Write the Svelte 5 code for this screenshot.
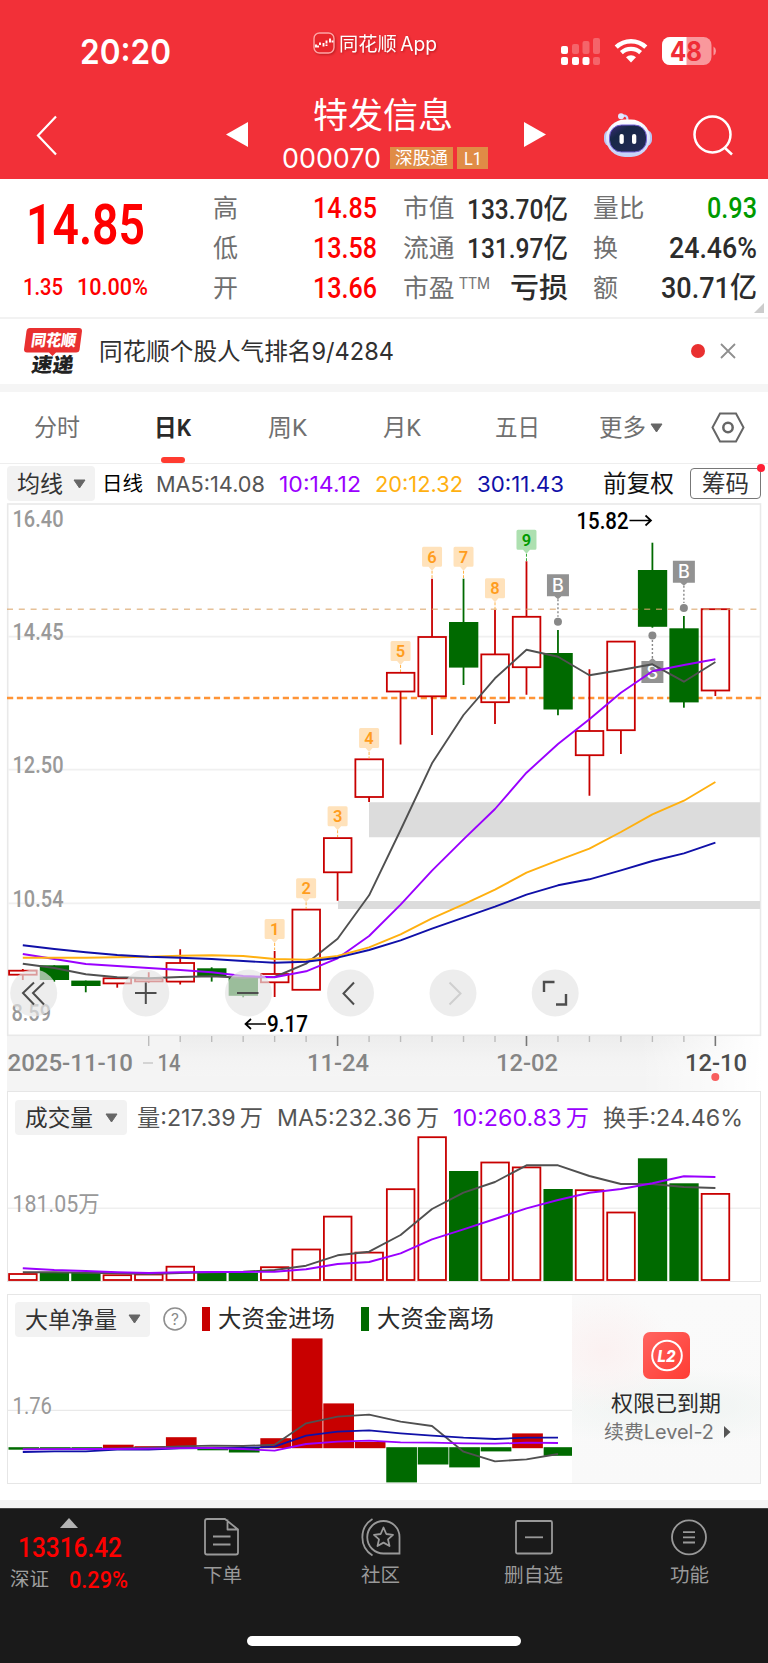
<script>
  const DIN = 'Roboto, "Noto Sans CJK SC", sans-serif';
  const UI = 'Inter, "Noto Sans CJK SC", sans-serif';
  const RED = '#c80000';
  const GREEN = '#006a00';
  const STEP = 31.48;
  const cx = (i) => 22.8 + i * STEP;
  const path = (ys) => ys.map((y, i) => `${cx(i).toFixed(1)},${y}`).join(' ');

  // [up, bodyTop, bodyBottom, high, low]
  const candles = [
    [1, 970.7, 974.7, 969, 980], [0, 965.3, 980, 965.3, 981.7], [0, 980.6, 986, 980.6, 992.3],
    [1, 978.3, 983.4, 978.3, 987.7], [1, 978.7, 981.4, 972.3, 983], [1, 963, 981.6, 949.3, 984.6],
    [0, 968.3, 976.7, 967.3, 981.6], [0, 977.5, 995.8, 977.5, 997.3], [1, 974, 982.3, 951, 997],
    [1, 909.6, 989.8, 909.6, 989.8], [1, 838.1, 872.3, 838.1, 900.8], [1, 759.3, 797, 759.3, 802],
    [1, 672.8, 691.5, 672.8, 744.5], [1, 637, 696.3, 578.7, 735], [0, 622, 667.6, 578.7, 685],
    [1, 654.4, 702.2, 610, 724], [1, 616.8, 667.2, 561.3, 694.7], [0, 653, 709.5, 630, 715.3],
    [1, 731, 755.2, 669.3, 795.7], [1, 641.6, 730.2, 641.6, 754], [0, 570, 626.8, 542.7, 627.7],
    [0, 628.3, 702.4, 616, 707.7], [1, 609.2, 690.5, 609.2, 696]
  ];
  const ma5 = [963.7, 968, 974.3, 977.3, 978.3, 977, 976.3, 977.7, 977, 963.7, 938.7, 895.3, 830, 763.3, 715, 678.3, 649.7, 656.7, 675.3, 670, 664.3, 681.7, 662];
  const ma10 = [954, 959, 964, 966, 968, 970, 972.3, 976, 977.3, 971.3, 958.3, 936, 904.7, 870.7, 839.3, 809, 772.7, 744, 719.3, 692.7, 671.3, 665, 659.3];
  const ma20 = [957.7, 957.7, 957.7, 957.3, 956.7, 955.7, 955.3, 956, 959, 959.7, 956, 947.3, 934.3, 918.3, 904.3, 889.7, 872.7, 860.3, 848.7, 832, 814.3, 800.7, 782];
  const ma30 = [945.3, 949, 952.3, 955, 956.7, 957.7, 959, 961, 962.7, 961.7, 957.7, 950, 940.3, 928.7, 917.7, 906.7, 894.7, 885.3, 879.3, 870.3, 861, 853.3, 842.7];

  // [number, candle index, box top, stem end]
  const counts = [
    [1, 8, 919, 950], [2, 9, 878.3, 909], [3, 10, 806.3, 837], [4, 11, 728, 758.5], [5, 12, 641, 672],
    [6, 13, 546.7, 578], [7, 14, 546.7, 578], [8, 15, 578.3, 609.5], [9, 16, 529.7, 561]
  ];

  const volTop = [1274, 1273, 1273, 1275.2, 1274.5, 1266.7, 1272.7, 1272.7, 1267.2, 1249.5, 1216.6, 1252.6, 1189.2, 1137.2, 1171, 1162.5, 1167.4, 1189, 1190.2, 1212.5, 1158.3, 1183.3, 1193.9];
  const vol5 = [1272.3, 1272.3, 1272.7, 1273.3, 1274, 1273, 1272.3, 1271.7, 1270, 1265.7, 1255.3, 1251.7, 1235, 1209, 1192.7, 1182, 1165.3, 1165.3, 1176, 1184, 1184, 1187, 1188];
  const vol10 = [1268.3, 1270, 1271, 1272.3, 1273, 1272.3, 1272, 1272, 1271.7, 1269.3, 1264, 1262, 1253.3, 1239.3, 1229.3, 1219, 1208.3, 1200, 1192.7, 1189, 1183.3, 1176.3, 1177];

  const flow = [
    [0, 1449.7], [0, 1448.8], [0, 1448.8], [1, 1444.7], [1, 1446.2], [1, 1437.2], [0, 1450.3], [0, 1452.5], [1, 1438.2],
    [1, 1338.4], [1, 1403.4], [1, 1442], [0, 1482.4], [0, 1464.5], [0, 1467.4], [0, 1451.4], [1, 1433.4], [0, 1455.8]
  ];
  const f1 = [1449, 1449, 1449, 1448.5, 1447.7, 1446.3, 1445.7, 1446, 1444.7, 1423.3, 1416.7, 1414.7, 1421.7, 1426, 1451.7, 1461.3, 1459.3, 1454];
  const f2 = [1452, 1451.3, 1451.3, 1449.7, 1449.5, 1448.3, 1448, 1448, 1446.7, 1435.7, 1431.7, 1430.3, 1433.3, 1435.7, 1437.7, 1439, 1437.7, 1437.7];
  const f3 = [1449.3, 1449.2, 1449, 1449, 1448.7, 1448.2, 1448, 1449, 1450.7, 1444, 1441.7, 1440.7, 1442.3, 1442.7, 1443.3, 1443.7, 1442.7, 1443];

  const stats = [
    { k: '高', v: '14.85', w: 64, c: '#fe0000', k2: '市值', v2: '133.70亿', w2: 101, k3: '量比', v3: '0.93', w3: 50, c3: '#009a00' },
    { k: '低', v: '13.58', w: 64, c: '#fe0000', k2: '流通', v2: '131.97亿', w2: 101, k3: '换', v3: '24.46%', w3: 88, c3: '#2c2c2c' },
    { k: '开', v: '13.66', w: 64, c: '#fe0000', k2: '市盈', ttm: true, v2: '亏损', w2: 58, k3: '额', v3: '30.71亿', w3: 96, c3: '#2c2c2c' }
  ];
  const tabs = [['分时', 46], ['日K', 37], ['周K', 39], ['月K', 38], ['五日', 45]];
</script>

{#snippet fit(text, w, size, fill, weight = 400, fam = DIN)}
  <svg class="fit" width={w} height={size}>
    <text x="0" y={size * 0.86} textLength={w} lengthAdjust="spacingAndGlyphs" font-family={fam} font-size={size} font-weight={weight} {fill}>{text}</text>
  </svg>
{/snippet}

{#snippet mark(text, x, w, cy, size, fill, weight = 400, fam = DIN)}
  <text {x} y={cy + size * 0.358} textLength={w} lengthAdjust="spacingAndGlyphs" font-family={fam} font-size={size} font-weight={weight} {fill}>{text}</text>
{/snippet}

{#snippet caret(w, h)}
  <svg class="fit" width={w} height={h}><path d="M1 1H{w - 1}L{w / 2} {h - 1}Z" fill="#666" stroke="#666" stroke-linejoin="round" /></svg>
{/snippet}

<div class="screen">
  <header>
    <div class="status">
      <div class="time">{@render fit('20:20', 91, 33.5, '#fff', 600, UI)}</div>
      <div class="app">
        <svg width="22" height="22" viewBox="0 0 22 22">
          <rect x="1" y="1" width="20" height="20" rx="5.5" fill="#e8262c" stroke="#ffa5a5" stroke-width="1.4" />
          <path d="M3 12.5v3M5 13.500v2M7 10.500v2.500M10.500 11v3.500M13.500 8.500v3M13.500 12.500v1.500M17 6.500v4M19.500 8.500v2" stroke="#fff" stroke-width="1.900" fill="none" />
        </svg>
        <span>{@render fit('同花顺\u2009App', 98, 19.5, '#fff', 400, UI)}</span>
      </div>
      <svg class="signal" width="40" height="28" fill="#fff">
        <rect x="0" y="9" width="7" height="8" rx="2" /><rect x="0" y="20" width="7" height="8" rx="2" />
        <rect x="11" y="7" width="7" height="10" rx="2" opacity=".25" /><rect x="11" y="20" width="7" height="8" rx="2" />
        <rect x="21.5" y="4" width="7" height="13" rx="2" opacity=".25" /><rect x="21.5" y="20" width="7" height="8" rx="2" />
        <rect x="32" y="1" width="7" height="16" rx="2" opacity=".25" /><rect x="32" y="20" width="7" height="8" rx="2" opacity=".25" />
      </svg>
      <svg class="wifi" width="34" height="26" viewBox="0 0 34 26" fill="none" stroke="#fff">
        <path d="M2.2 9.2A21.3 21.3 0 0 1 31.8 9.2" stroke-width="4.4" />
        <path d="M7.4 14.6A14 14 0 0 1 26.6 14.6" stroke-width="4.2" />
        <path d="M17 24.5L12 19.3A7.4 7.4 0 0 1 22 19.3Z" fill="#fff" stroke="none" />
      </svg>
      <svg class="battery" width="55" height="28">
        <defs><clipPath id="charge"><rect width="24.5" height="28" /></clipPath></defs>
        <rect width="49.5" height="28" rx="8" fill="#fff" opacity=".5" />
        <rect width="49.5" height="28" rx="8" fill="#fff" clip-path="url(#charge)" />
        <path d="M51.5 9.5Q54 11 54 14T51.5 18.5Z" fill="#fff" opacity=".5" />
        {@render mark('48', 8, 32, 14.2, 26.5, '#f02c36', 700, UI)}
      </svg>
    </div>
    <div class="nav">
      <svg class="back" width="22" height="42"><path d="M20 1.5L2 20.5L20 39.5" fill="none" stroke="#fff" stroke-width="2.2" /></svg>
      <svg width="22" height="25"><path d="M22 0V25L0 12.5Z" fill="#fff" /></svg>
      <div class="title">
        {@render fit('特发信息', 140, 35, '#fff')}
        <div class="code">
          {@render fit('000070', 99, 27.5, '#fff', 400, UI)}
          <span class="badge b1">{@render fit('深股通', 53, 17.5, '#fff')}</span>
          <span class="badge b2">{@render fit('L1', 18, 18.5, '#fff')}</span>
        </div>
      </div>
      <svg width="22" height="25"><path d="M0 0V25L22 12.5Z" fill="#fff" /></svg>
      <svg class="robot" width="48" height="46" viewBox="0 0 48 46">
        <defs>
          <linearGradient id="shell" x2="0" y2="1"><stop stop-color="#fff" /><stop offset="1" stop-color="#c3d0f8" /></linearGradient>
          <linearGradient id="face" x2="1" y2="1"><stop stop-color="#3e2c7c" /><stop offset=".3" stop-color="#172747" /><stop offset="1" stop-color="#252b58" /></linearGradient>
        </defs>
        <path d="M17 4Q25 2 23 10" fill="none" stroke="#ccd8ff" stroke-width="2.2" /><circle cx="17" cy="4.3" r="3" fill="#e2e8ff" />
        <rect x="0" y="18" width="48" height="16" rx="6" fill="#b9c5f4" />
        <rect x="2" y="7.500" width="44" height="37.500" rx="19" fill="url(#shell)" />
        <rect x="5.5" y="13" width="37" height="27" rx="12" fill="url(#face)" stroke="#7560d8" />
        <rect x="15.5" y="22" width="4.3" height="10" rx="2.1" fill="#fff" /><rect x="28" y="22" width="4.3" height="10" rx="2.1" fill="#fff" />
      </svg>
      <svg width="41" height="42" fill="none" stroke="#fff" stroke-width="2.5"><circle cx="19.500" cy="19.500" r="18" /><path d="M31.5 32.500L39 39.5" /></svg>
    </div>
  </header>

  <section class="quote">
    <div class="price">
      <div class="last">{@render fit('14.85', 119, 55, '#fe0000', 600)}</div>
      <div class="chg">{@render fit('1.35', 40, 23.5, '#fe0000', 500)}{@render fit('10.00%', 71, 23.5, '#fe0000', 500)}</div>
    </div>
    <div class="stats">
      {#each stats as s}
        <div class="srow">
          <span class="k">{@render fit(s.k, 25, 25, '#707070')}</span>
          <span class="v">{@render fit(s.v, s.w, 29, s.c, 500)}</span>
          <span class="k">{@render fit(s.k2, 51.5, 25, '#707070')}{#if s.ttm}<span class="ttm">{@render fit('TTM', 31, 16.5, '#777')}</span>{/if}</span>
          <span class="v">{@render fit(s.v2, s.w2, 28.5, '#2c2c2c', 500)}</span>
          <span class="k">{@render fit(s.k3, s.k3.length === 2 ? 51.5 : 25, 25, '#707070')}</span>
          <span class="v">{@render fit(s.v3, s.w3, 29, s.c3, 500)}</span>
        </div>
      {/each}
    </div>
    <i class="corner"></i>
  </section>

  <section class="news">
    <svg class="logo" width="58" height="48" viewBox="0 0 58 48">
      <path d="M6 0H55Q58 0 58 3L55.5 22Q55 24.5 52 24.5H32L28.5 28L25 24.5H3Q0 24.5 0 21.5L2.5 3Q3 0 6 0Z" fill="#e93030" />
      <g transform="skewX(-8)" font-family={DIN} font-weight="900">
        <text x="9" y="18.5" font-size="16" fill="#fff" textLength="45" lengthAdjust="spacingAndGlyphs">同花顺</text>
        <text x="13" y="44.5" font-size="20" fill="#222" textLength="42" lengthAdjust="spacingAndGlyphs">速递</text>
      </g>
    </svg>
    <span class="msg">{@render fit('同花顺个股人气排名9/4284', 295, 24, '#303030', 400, UI)}</span>
    <i class="unread"></i>
    <svg width="16" height="16"><path d="M1 1L15 15M15 1L1 15" stroke="#8f8f8f" stroke-width="1.8" /></svg>
  </section>

  <nav class="tabs">
    {#each tabs as [name, w], i}
      <div class="tab" class:on={i === 1}>{@render fit(name, w, 23.5, i === 1 ? '#2a2a2a' : '#707070', i === 1 ? 600 : 400)}</div>
    {/each}
    <div class="tab more">{@render fit('更多', 47, 23.5, '#707070')}{@render caret(13, 10)}</div>
    <svg width="34" height="31" fill="none" stroke="#666"><path d="M9 1.5H25L32.5 15.5L25 29.5H9L1.5 15.5Z" stroke-width="2" /><circle cx="17" cy="15.5" r="4.7" stroke-width="2.5" /></svg>
  </nav>

  <section class="legend">
    <div class="chip ma">{@render fit('均线', 46, 23, '#333')}{@render caret(13, 10)}</div>
    {@render fit('日线', 41, 20.5, '#000')}
    {@render fit('MA5:14.08', 109, 21.5, '#555', 400, UI)}
    {@render fit('10:14.12', 82, 21.5, '#9a00ff', 400, UI)}
    {@render fit('20:12.32', 88, 21.5, '#ffb010', 400, UI)}
    {@render fit('30:11.43', 87, 21.5, '#1010a8', 400, UI)}
    {@render fit('前复权', 71, 23.5, '#111')}
    <div class="chips">{@render fit('筹码', 47, 23.5, '#333')}<i></i></div>
  </section>

  <svg class="kline" width="768" height="588" viewBox="0 503 768 588">
    <defs>
      <linearGradient id="fade"><stop stop-color="#fff" stop-opacity="0" /><stop offset="1" stop-color="#fff" /></linearGradient>
      <linearGradient id="axis" x2="0" y2="1"><stop stop-color="#eaeaea" /><stop offset=".6" stop-color="#f3f3f3" /><stop offset="1" stop-color="#f5f5f5" /></linearGradient>
    </defs>
    <rect x="7" y="1035" width="754" height="56" fill="#f4f4f4" />
    <rect x="180" y="1036" width="581" height="40" fill="url(#axis)" opacity=".7" />
    <rect x="640" y="1036" width="122" height="55" fill="url(#fade)" />
    <rect x="7.7" y="504" width="752.8" height="531.3" fill="#fff" stroke="#e9e9e9" stroke-width="1.6" />
    {#each [636.7, 769.7, 903.3] as y}<path d="M8 {y}H760" stroke="#f0f0f0" stroke-width="1.7" />{/each}
    <path d="M369 802.3H760V837.3H369ZM338 901H760V909H338Z" fill="#dcdcdc" />

    {@render mark('16.40', 12.5, 51, 518.5, 23.5, '#999', 500)}
    {@render mark('14.45', 12.5, 51, 632, 23.5, '#999', 500)}
    {@render mark('12.50', 12.5, 51, 765, 23.5, '#999', 500)}
    {@render mark('10.54', 12.5, 51, 898.5, 23.5, '#999', 500)}
    {@render mark('8.59', 11.5, 39.5, 1012.5, 23.5, '#999', 500)}

    <path d="M7 698H761" stroke="#ff9436" stroke-width="2.3" stroke-dasharray="6.2 3.65" />
    {#each candles as [up, t, b, hi, lo], i}
      {#if up}
        <path d="M{cx(i)} {hi}V{t}M{cx(i)} {b}V{lo}" stroke={RED} stroke-width="1.8" />
        <rect x={cx(i) - 13.7} y={t} width="27.6" height={b - t} fill="none" stroke={RED} stroke-width="1.8" />
      {:else}
        <path d="M{cx(i)} {hi}V{lo}" stroke={GREEN} stroke-width="1.8" />
        <rect x={cx(i) - 14.5} y={t} width="29.3" height={b - t} fill={GREEN} />
      {/if}
    {/each}
    <path d="M7 609.3H761" stroke="#dba66c" stroke-opacity=".7" stroke-width="1.5" stroke-dasharray="6 5.8" />

    {#each counts as [n, i, y, end]}
      <path d="M{cx(i)} {y + 24}V{end}" stroke={n === 9 ? '#33a833' : '#ffb347'} stroke-width="1" stroke-dasharray="3 1.5" />
      <path d="M{cx(i) - 8.5} {y}h17q1.5 0 1.5 1.5v17q0 1.5 -1.5 1.5h-5l-3.5 4l-3.5 -4h-5q-1.5 0 -1.5 -1.5v-17q0 -1.5 1.5 -1.5Z" fill={n === 9 ? '#ade0b0' : '#ffe2bb'} />
      <text x={cx(i)} y={y + 16} text-anchor="middle" font-family={DIN} font-size="16.5" font-weight="600" fill={n === 9 ? '#009a00' : '#ff9d1e'}>{n}</text>
    {/each}

    {#each [[17, 574.3, 621.7], [21, 560.7, 608]] as [i, y, d]}
      <path d="M{cx(i)} {y + 25}V{d - 5}" stroke="#888" stroke-width="1.4" stroke-dasharray="2 2" />
      <path d="M{cx(i) - 11} {y}h22v22h-7.500l-3.500 3l-3.500 -3h-7.500Z" fill="#929292" />
      <circle cx={cx(i)} cy={d} r="4" fill="#888" />
      <text x={cx(i)} y={y + 17.5} text-anchor="middle" font-family={UI} font-size="18" font-weight="500" fill="#fff">B</text>
    {/each}
    <path d="M{cx(20)} 640V658" stroke="#888" stroke-width="1.4" stroke-dasharray="2 2" />
    <circle cx={cx(20)} cy="635.5" r="4" fill="#888" />
    <path d="M{cx(20) - 11} 661h7.500l3.500 -3l3.500 3h7.500v22h-22Z" fill="#929292" />
    <text x={cx(20)} y="678.8" text-anchor="middle" font-family={UI} font-size="18" font-weight="500" fill="#fff">S</text>

    <g fill="none" stroke-width="1.9" stroke-linejoin="round">
      <polyline points={path(ma5)} stroke="#505050" />
      <polyline points={path(ma10)} stroke="#9a00ff" />
      <polyline points={path(ma20)} stroke="#ffb010" />
      <polyline points={path(ma30)} stroke="#1010a8" />
    </g>

    {@render mark('15.82', 576.5, 52, 520.5, 23, '#000', 500)}
    <path d="M629.500 520.500H651M645.500 515.500L651 520.500L645.500 525.500" fill="none" stroke="#000" stroke-width="1.7" />
    {@render mark('9.17', 267, 41, 1024.2, 23, '#000', 500)}
    <path d="M266 1024H245.500M251 1019L245.500 1024L251 1029" fill="none" stroke="#000" stroke-width="1.7" />

    <g fill="#e4e4e4" fill-opacity=".68">
      {#each [33.7, 145.8, 248.4, 350.5, 453, 555.2] as x}<circle cx={x} cy="993" r="23.500" />{/each}
    </g>
    <g fill="none" stroke="#4d4d4d" stroke-width="2">
      <path d="M34 982.500L23 993L34 1004.500M44 982.500L33 993L44 1004.500" />
      <path d="M135 993H156.500M145.800 982.500V1004M237 993H258.500" />
      <path d="M354 982.500L343.500 993.500L354 1004.500" />
      <path d="M449.500 982.500L460.500 993.500L449.500 1004.500" stroke="#cfcfcf" />
      <path d="M544 992V982H554.500M566 994V1004.500H556" stroke-width="2.400" />
    </g>

    {#each Array(19) as _, k}
      {@const i = k + 4}
      {#if [10, 16, 22].includes(i)}
        <path d="M{cx(i)} 1036V1046" stroke="#777" stroke-width="1.600" />
      {:else}
        <path d="M{cx(i)} 1036V{i === 4 ? 1046 : 1042}" stroke="#bcbcbc" stroke-width="1.400" />
      {/if}
    {/each}
    {@render mark('2025-11-10', 7.5, 125.5, 1063, 23, '#858585', 500)}
    <path d="M143 1063H153" stroke="#ccc" stroke-width="1.600" />
    {@render mark('14', 157.5, 23, 1063, 23, '#858585', 500)}
    {@render mark('11-24', 307, 62, 1063, 23, '#858585', 500)}
    {@render mark('12-02', 496, 62, 1063, 23, '#858585', 500)}
    {@render mark('12-10', 685, 62, 1063, 23, '#4c4c4c', 500)}
    <circle cx="715.300" cy="1077" r="4" fill="#f85f5f" />
  </svg>

  <section class="panel volume">
    <div class="phead">
      <div class="chip">{@render fit('成交量', 68, 23, '#333')}{@render caret(13, 10)}</div>
      {@render fit('量:217.39\u2009万', 126, 23, '#555', 400, UI)}
      {@render fit('MA5:232.36\u2009万', 162, 23, '#555', 400, UI)}
      {@render fit('10:260.83\u2009万', 136, 23, '#9a00ff', 400, UI)}
      {@render fit('换手:24.46%', 140, 23, '#555', 400, UI)}
    </div>
    <svg class="plot" width="752" height="144" viewBox="8 1137 752 144">
      <path d="M8 1208.300H760" stroke="#efefef" stroke-width="1.500" />
      {@render mark('181.05万', 12.5, 87, 1204, 23, '#999', 400)}
      {#each volTop as t, i}
        {#if candles[i][0]}
          <rect x={cx(i) - 13.7} y={t} width="27.6" height={1280 - t} fill="none" stroke={RED} stroke-width="1.8" />
        {:else}
          <rect x={cx(i) - 14.5} y={t} width="29.3" height={1281 - t} fill={GREEN} />
        {/if}
      {/each}
      <g fill="none" stroke-width="1.9" stroke-linejoin="round">
        <polyline points={path(vol5)} stroke="#505050" /><polyline points={path(vol10)} stroke="#9a00ff" />
      </g>
    </svg>
  </section>

  <section class="panel orders">
    <div class="left">
      <div class="phead">
        <div class="chip">{@render fit('大单净量', 92, 23, '#333')}{@render caret(13, 10)}</div>
        <svg class="help" width="24" height="24"><circle cx="12" cy="12" r="11" fill="none" stroke="#8f8f8f" stroke-width="1.600" /><text x="12" y="17.500" text-anchor="middle" font-family={UI} font-size="15.500" fill="#8a8a8a">?</text></svg>
        <i class="key in"></i>{@render fit('大资金进场', 117, 23.500, '#2c2c2c')}
        <i class="key out"></i>{@render fit('大资金离场', 117, 23.500, '#2c2c2c')}
      </div>
      <svg width="564" height="145" viewBox="8 1338 564 145">
        <path d="M8 1410.300H572" stroke="#e9e9e9" stroke-width="1.300" />
        {@render mark('1.76', 12.5, 39.5, 1406, 23, '#999', 400)}
        {#each flow as [inn, y], i}
          <rect x={8.5 + i * STEP} y={inn ? y : 1447.2} width="30.700" height={inn ? 1448.200 - y : y - 1447.2} fill={inn ? RED : GREEN} />
        {/each}
        <g fill="none" stroke-width="1.800" stroke-linejoin="round">
          <polyline points={path(f1)} stroke="#505050" /><polyline points={path(f2)} stroke="#1010a8" /><polyline points={path(f3)} stroke="#9a00ff" />
        </g>
      </svg>
    </div>
    <div class="expired">
      <svg class="l2" width="47" height="47">
        <defs><linearGradient id="l2" x2="1" y2="1"><stop stop-color="#ff6460" /><stop offset="1" stop-color="#ff3c33" /></linearGradient></defs>
        <rect width="47" height="47" rx="7" fill="url(#l2)" /><circle cx="24" cy="23.500" r="14.800" fill="none" stroke="#fff" stroke-width="2" />
        <text x="14.500" y="29.500" font-family={UI} font-style="italic" font-weight="800" font-size="16" fill="#fff" textLength="18" lengthAdjust="spacingAndGlyphs">L2</text>
      </svg>
      {@render fit('权限已到期', 110, 22, '#2c2c2c')}
      <div class="renew">{@render fit('续费Level-2', 110, 19.500, '#747474', 400, UI)}<svg width="7" height="12"><path d="M0 0L6.500 6L0 12Z" fill="#555" /></svg></div>
    </div>
  </section>

  <footer>
    <div class="index">
      <svg class="up" width="18" height="10"><path d="M9 0L18 10H0Z" fill="#b3b3b3" /></svg>
      {@render fit('13316.42', 104, 28, '#fe0000', 500)}
      <div class="sz">{@render fit('深证', 39, 19, '#a0a0a0')}{@render fit('0.29%', 59, 24, '#fe0000', 500)}</div>
    </div>
    <div class="act">
      <svg width="40" height="40" fill="none" stroke="#999" stroke-width="1.800"><path d="M23 2H5Q3 2 3 4V35.500Q3 37.500 5 37.500H34Q36 37.500 36 35.500V12.500ZM25.500 2.500V12.500H36M11 19.500H28.500M11 27.500H28.500" stroke-linejoin="round" /></svg>
      {@render fit('下单', 39, 19.500, '#999')}
    </div>
    <div class="act">
      <svg width="42" height="40" fill="none" stroke="#999" stroke-width="1.800"><path d="M13.500 2A21.500 21.500 0 0 0 13.500 38.500M24.500 4A16 16 0 0 0 24.500 36.500H40.500V20A16 16 0 0 0 24.500 4Z" /><path d="M24.500 10.500L27.300 17L34 17.800L29 22.400L30.500 29L24.500 25.600L18.500 29L20 22.400L15 17.800L21.700 17Z" stroke-linejoin="round" /></svg>
      {@render fit('社区', 39, 19.500, '#999')}
    </div>
    <div class="act">
      <svg width="40" height="40" fill="none" stroke="#999" stroke-width="1.800"><rect x="3" y="4" width="36" height="32.500" rx="1.500" /><path d="M12 20.300H30" /></svg>
      {@render fit('删自选', 59, 19.500, '#999')}
    </div>
    <div class="act">
      <svg width="40" height="40" fill="none" stroke="#999" stroke-width="1.800"><circle cx="20" cy="20.300" r="17" /><path d="M14 15.200H26M14 20.300H26M14 25.500H26" /></svg>
      {@render fit('功能', 39, 19.500, '#999')}
    </div>
    <i class="home"></i>
  </footer>
</div>

<style>
  :global(body) { margin: 0; background: #fff; }
  .screen { width: 768px; height: 1663px; display: flex; flex-direction: column; background: #fff; overflow: hidden; }
  svg { display: block; flex: none; }
  .fit, .battery, .plot { overflow: visible; }
  i { display: block; flex: none; }

  header { height: 179px; flex: none; background: #f23038; }
  .status { height: 92px; display: flex; align-items: flex-start; padding-left: 80px; }
  .time { margin-top: 35px; }
  .app { display: flex; gap: 4px; margin: 32px 0 0 142px; filter: drop-shadow(1.500px 1.500px 1px #7007); }
  .app span { margin-top: 2px; }
  .signal { margin: 37px 0 0 124px; }
  .wifi { margin: 38px 0 0 13px; }
  .battery { margin: 37px 0 0 14px; }
  .nav { height: 87px; display: flex; align-items: flex-start; padding-left: 36px; }
  .nav > svg { margin-top: 30px; }
  .nav > .back { margin: 23px 168px 0 0; }
  .title { width: 206px; margin: 6px 36px 0 34px; display: flex; flex-direction: column; align-items: flex-start; }
  .title > .fit { margin-left: 31px; }
  .code { display: flex; align-items: center; margin-top: 13px; height: 23px; }
  .badge { height: 22px; margin-top: 1px; background: #e08c46; display: flex; align-items: center; justify-content: center; }
  .b1 { width: 63px; margin-left: 9px; }
  .b2 { width: 31px; margin-left: 4px; }
  .nav > .robot { margin: 20px 41px 0 58px; }
  .nav > svg:last-child { margin-top: 23px; }

  .quote { height: 138px; flex: none; display: flex; position: relative; }
  .price { width: 213px; padding-top: 18px; box-sizing: border-box; }
  .last { margin-left: 26px; }
  .chg { display: flex; gap: 14px; margin: 23px 0 0 23px; }
  .stats { width: 544px; padding-top: 9px; display: flex; flex-direction: column; }
  .srow { height: 39.700px; display: grid; grid-template-columns: 50px 114px 113px 78px 99px 90px; align-items: center; }
  .k { display: flex; align-items: center; height: 30px; }
  .v { display: flex; justify-content: flex-end; align-items: center; }
  .k:nth-child(3) { padding-left: 26px; }
  .k:nth-child(5) { padding-left: 25px; }
  .ttm { margin: -8px 0 0 4px; }
  .corner { position: absolute; right: 4px; bottom: 4px; border: 5px solid transparent; border-right-color: #ccc; border-bottom-color: #ccc; }

  .news { height: 65px; flex: none; border-top: 2px solid #f2f2f2; border-bottom: 8px solid #f5f5f5; display: flex; align-items: center; padding-left: 24px; }
  .msg { margin: -2px 0 0 17px; }
  .unread { width: 14px; height: 14px; border-radius: 50%; background: #e93030; margin: -1px 15px 0 297px; }
  .news > svg:last-child { margin-top: -1px; }

  .tabs { height: 71px; flex: none; box-sizing: content-box; border-bottom: 1px solid #eee; display: flex; align-items: center; }
  .tab { width: 115px; height: 71px; display: flex; align-items: center; justify-content: center; position: relative; left: -0.500px; }
  .tab.on::after { content: ''; position: absolute; left: 46px; bottom: 0; width: 24px; height: 6px; border-radius: 3px; background: #ff3b30; }
  .more { width: 113px; gap: 4px; margin-right: 23px; }

  .legend { height: 39px; flex: none; display: flex; align-items: center; padding-left: 7px; }
  .chip { height: 35px; background: #f2f2f2; border-radius: 4px; display: flex; align-items: center; gap: 12px; padding: 0 9px 0 10px; }
  .legend > .ma { height: 35px; width: 69px; margin-right: 7px; gap: 10px; }
  .legend > :nth-child(2) { margin-right: 12.500px; }
  .legend > :nth-child(3) { margin-right: 14.500px; }
  .legend > :nth-child(4) { margin-right: 13.500px; }
  .legend > :nth-child(5) { margin-right: 14px; }
  .legend > :nth-child(6) { margin-right: 39px; }
  .chips { position: relative; width: 69px; height: 29px; margin-left: 16px; border: 1px solid #777; border-radius: 4px; display: flex; align-items: center; justify-content: center; }
  .chips i { position: absolute; right: -5px; top: -5px; width: 8px; height: 8px; border-radius: 50%; background: #ff1f34; }

  .kline { flex: none; }
  .panel { width: 752px; flex: none; margin-left: 7px; border: 1px solid #e6e6e6; }
  .volume { height: 189px; }
  .phead { height: 45px; display: flex; align-items: center; padding: 6px 0 0 7px; box-sizing: border-box; gap: 14px; }
  .volume .phead { padding-top: 6px; }
  .volume .chip { margin-right: -4px; }

  .orders { margin-top: 12px; height: 188px; display: flex; }
  .left { width: 564px; }
  .orders .phead { height: 43px; gap: 0; padding-top: 5px; }
  .orders .chip { gap: 11px; }
  .help { margin: 0 15px 0 13px; }
  .key { width: 8px; height: 24px; }
  .in { background: #c80000; margin-right: 8px; }
  .out { background: #006a00; margin: 0 8px 0 26px; }
  .expired { width: 188px; display: flex; flex-direction: column; align-items: center; background: radial-gradient(ellipse 70px 60px at 32px 56px, #fbf1f1, transparent), radial-gradient(ellipse 150px 40px at 100px 112px, #eef3f1, transparent), linear-gradient(#fafafa, #f9f9f9); }
  .l2 { margin: 37px 0 13px; }
  .renew { display: flex; align-items: center; gap: 10px; margin: 8px 0 0 2px; }

  footer { height: 154px; flex: none; margin-top: 24px; border-top: 1px solid #444; box-shadow: 0 -8px #f5f5f5; background: #1a1a1a; display: flex; position: relative; }
  .index { width: 140px; display: flex; flex-direction: column; align-items: center; padding-top: 9px; box-sizing: border-box; }
  .up { margin-bottom: 5px; margin-left: -2px; }
  .sz { display: flex; align-items: center; gap: 20px; margin: 6px 0 0 -2px; }
  .act { width: 156px; padding-top: 8px; display: flex; flex-direction: column; align-items: center; gap: 8px; }
  .act:nth-child(2) { width: 164px; }
  .act:nth-child(3) { width: 152px; }
  .act:nth-child(4) { width: 154px; }
  .act:nth-child(5) { width: 158px; }
  .home { position: absolute; left: 247px; top: 127px; width: 274px; height: 10px; border-radius: 5px; background: #fff; }
</style>
